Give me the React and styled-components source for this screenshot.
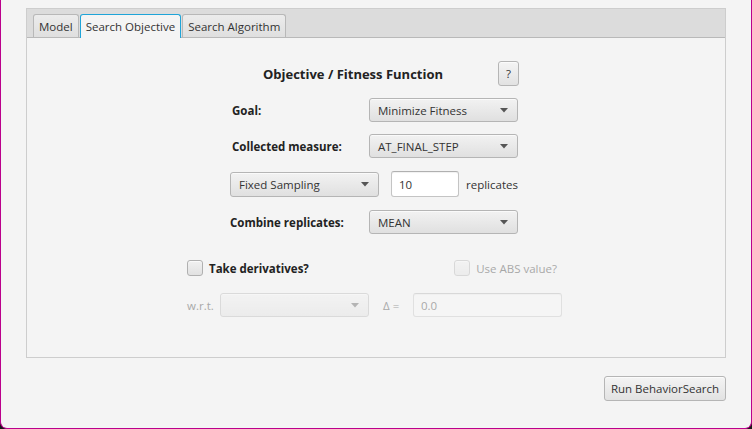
import React from "react";
import styled, { createGlobalStyle } from "styled-components";

const Global = createGlobalStyle`
  html, body { margin: 0; padding: 0; background: #1a1a1a; }
  body { font-family: "Open Sans", "Noto Sans", sans-serif; }
  * { box-sizing: border-box; }
`;

const Frame = styled.div`
  width: 752px;
  height: 429px;
  background: #f4f4f4;
  border: 1px solid #bb008c;
  border-top: none;
  border-radius: 0 0 7px 7px;
  padding: 8px 25px 0;
  display: flex;
  flex-direction: column;
  font-size: 11.5px;
  color: #333;
`;

const Pane = styled.div`
  width: 700px;
  height: 350px;
  border: 1px solid #cdcdcd;
  display: flex;
  flex-direction: column;
`;

const TabHeader = styled.div`
  height: 29px;
  background: #dcdcdc;
  border-bottom: 1px solid #b9b9b9;
  display: flex;
  align-items: flex-end;
  gap: 1px;
  padding-left: 6px;
`;

const Tab = styled.div`
  padding: 0 5px;
  display: flex;
  align-items: center;
  border: 1px solid ${(p) => (p.$selected ? "#1fa4d8" : "#b8b8b8")};
  border-bottom: none;
  border-radius: 3px 3px 0 0;
  background: ${(p) =>
    p.$selected ? "#f4f4f4" : "linear-gradient(#ececec, #dfdfdf)"};
  margin-bottom: ${(p) => (p.$selected ? "-1px" : "0")};
  height: ${(p) => (p.$selected ? "24px" : "23px")};
  color: #333;
  white-space: nowrap;
`;

const Content = styled.div`
  flex: 1;
  display: flex;
  justify-content: center;
  padding: 23px 3px 0 0;
`;

const Block = styled.div`
  width: 375px;
  display: flex;
  flex-direction: column;
`;

const TitleRow = styled.div`
  width: 332px;
  height: 25px;
  display: grid;
  grid-template-columns: 1fr auto 1fr;
  align-items: center;
`;

const Title = styled.div`
  font-weight: bold;
  font-size: 13px;
  color: #222;
`;

const HelpCell = styled.div`
  display: flex;
  justify-content: flex-end;
`;

const Button = styled.div`
  height: ${(p) => p.$h || 25}px;
  width: ${(p) => p.$w}px;
  display: flex;
  align-items: center;
  justify-content: center;
  border: 1px solid #b5b5b5;
  border-radius: 3px;
  background: linear-gradient(#f4f4f4, #e2e2e2);
  box-shadow: inset 0 1px 0 #fbfbfb;
  color: #333;
  white-space: nowrap;
`;

const FormRow = styled.div`
  margin-top: ${(p) => p.$mt}px;
  margin-left: 43px;
  display: grid;
  grid-template-columns: 139px 149px;
  align-items: center;
`;

const Label = styled.div`
  font-weight: bold;
  color: #222;
  padding-left: ${(p) => p.$pl || 0}px;
  white-space: nowrap;
`;

const Combo = styled.div`
  width: ${(p) => p.$w || 149}px;
  height: ${(p) => p.$h || 24}px;
  border: 1px solid #b5b5b5;
  border-radius: 3px;
  background: linear-gradient(#f2f2f2, #e0e0e0);
  box-shadow: inset 0 1px 0 #fafafa;
  display: flex;
  align-items: center;
  padding: 0 9px 0 8px;
  color: #333;
  opacity: ${(p) => (p.$disabled ? 0.4 : 1)};
`;

const ComboText = styled.span`
  flex: 1;
  white-space: nowrap;
`;

const Arrow = () => (
  <svg width="8" height="5" viewBox="0 0 8 5">
    <path d="M0 0H8L4 4.5Z" fill="#555" />
  </svg>
);

const SamplingRow = styled.div`
  margin-top: 13px;
  margin-left: 43px;
  display: flex;
  align-items: center;
`;

const TextField = styled.div`
  width: ${(p) => p.$w}px;
  height: ${(p) => p.$h || 24}px;
  margin-left: ${(p) => p.$ml || 0}px;
  border: 1px solid #c4c4c4;
  border-top-color: #b0b0b0;
  border-radius: 3px;
  background: ${(p) => (p.$disabled ? "#f8f8f8" : "#fff")};
  box-shadow: inset 0 1px 1px rgba(0, 0, 0, 0.06);
  display: flex;
  align-items: center;
  padding-left: 7px;
  color: #333;
  opacity: ${(p) => (p.$disabled ? 0.4 : 1)};
`;

const Plain = styled.span`
  margin-left: ${(p) => p.$ml || 0}px;
  color: ${(p) => (p.$disabled ? "#a9a9a9" : "#333")};
  white-space: nowrap;
`;

const CheckRow = styled.div`
  margin-top: 26px;
  display: flex;
  align-items: center;
  padding-right: 5px;
`;

const CheckItem = styled.label`
  display: flex;
  align-items: center;
  gap: 6px;
  margin-left: ${(p) => (p.$right ? "auto" : "0")};
  opacity: ${(p) => (p.$disabled ? 0.4 : 1)};
`;

const Box = styled.span`
  width: 16px;
  height: 16px;
  border: 1px solid #b0b0b0;
  border-radius: 3px;
  background: linear-gradient(#f1f1f1, #e1e1e1);
  box-shadow: inset 0 1px 0 #fafafa;
`;

const WrtRow = styled.div`
  margin-top: 17px;
  display: grid;
  grid-template-columns: 33px 149px 1fr 149px;
  align-items: center;
`;

const Delta = styled.span`
  padding-left: 14px;
  color: #a9a9a9;
  white-space: nowrap;
`;

const Footer = styled.div`
  width: 700px;
  margin-top: 18px;
  display: flex;
  justify-content: flex-end;
`;

export default function App() {
  return (
    <>
      <Global />
      <Frame>
        <Pane>
          <TabHeader>
            <Tab>Model</Tab>
            <Tab $selected>Search Objective</Tab>
            <Tab>Search Algorithm</Tab>
          </TabHeader>
          <Content>
            <Block>
              <TitleRow>
                <span />
                <Title>Objective / Fitness Function</Title>
                <HelpCell>
                  <Button $w={21} $h={25}>?</Button>
                </HelpCell>
              </TitleRow>
              <FormRow $mt={12}>
                <Label $pl={2}>Goal:</Label>
                <Combo>
                  <ComboText>Minimize Fitness</ComboText>
                  <Arrow />
                </Combo>
              </FormRow>
              <FormRow $mt={12}>
                <Label $pl={2}>Collected measure:</Label>
                <Combo>
                  <ComboText>AT_FINAL_STEP</ComboText>
                  <Arrow />
                </Combo>
              </FormRow>
              <SamplingRow>
                <Combo $h={25}>
                  <ComboText>Fixed Sampling</ComboText>
                  <Arrow />
                </Combo>
                <TextField $w={68} $h={26} $ml={12}>10</TextField>
                <Plain $ml={7}>replicates</Plain>
              </SamplingRow>
              <FormRow $mt={13}>
                <Label>Combine replicates:</Label>
                <Combo>
                  <ComboText>MEAN</ComboText>
                  <Arrow />
                </Combo>
              </FormRow>
              <CheckRow>
                <CheckItem>
                  <Box />
                  <Label>Take derivatives?</Label>
                </CheckItem>
                <CheckItem $right $disabled>
                  <Box />
                  <Plain>Use ABS value?</Plain>
                </CheckItem>
              </CheckRow>
              <WrtRow>
                <Plain $disabled>w.r.t.</Plain>
                <Combo $disabled>
                  <ComboText />
                  <Arrow />
                </Combo>
                <Delta>Δ =</Delta>
                <TextField $w={149} $disabled>0.0</TextField>
              </WrtRow>
            </Block>
          </Content>
        </Pane>
        <Footer>
          <Button $w={122} $h={25}>Run BehaviorSearch</Button>
        </Footer>
      </Frame>
    </>
  );
}
